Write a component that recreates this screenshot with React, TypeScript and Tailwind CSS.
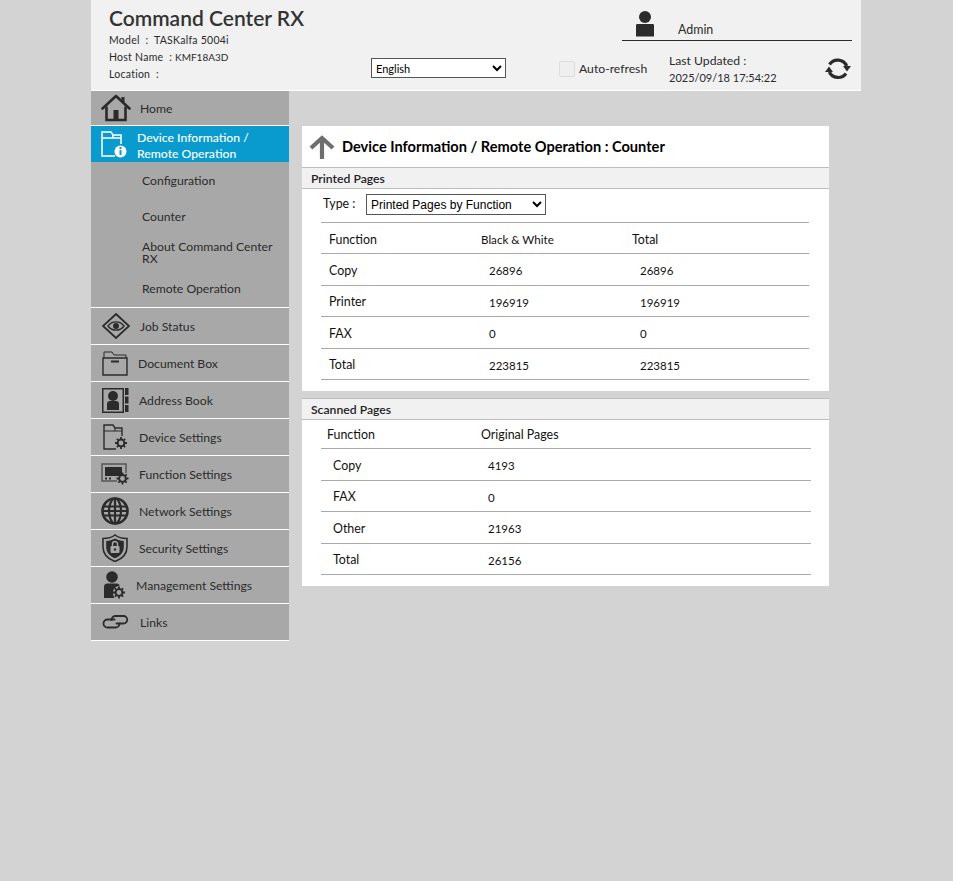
import type { ReactNode } from "react";

const ink = "#2b2b2b";

function HomeIcon() {
  return (
    <svg width="30" height="28" viewBox="0 0 30 28" fill="none" stroke={ink} strokeWidth="2.600">
      <path d="M1.500 14.500 15 2l13.500 12.500" strokeLinecap="round" strokeLinejoin="round" />
      <path d="M22 3v6" strokeWidth="3" />
      <path d="M5.500 12.500V26h19V12.500" />
      <rect x="12.500" y="16" width="5" height="10" fill={ink} stroke="none" />
    </svg>
  );
}

function DeviceInfoIcon() {
  return (
    <svg width="26" height="28" viewBox="0 0 26 28" fill="none" stroke="#fff" strokeWidth="1.500">
      <path d="M14 25H1V1h9l2 3h8v9" />
      <path d="M1 7h19M12 4v3" />
      <circle cx="19.500" cy="20.500" r="6" fill="#fff" stroke="none" />
      <rect x="18.500" y="19" width="2" height="5" fill="#0a9bce" stroke="none" />
      <rect x="18.500" y="16" width="2" height="2" fill="#0a9bce" stroke="none" />
    </svg>
  );
}

function EyeIcon() {
  return (
    <svg width="28" height="26" viewBox="0 0 28 26" fill="none" stroke={ink}>
      <path d="M14 1 27 13 14 25 1 13Z" strokeWidth="1.800" />
      <path d="M6 13c4-5.500 12-5.500 16 0-4 5.500-12 5.500-16 0Z" strokeWidth="1.400" />
      <circle cx="14" cy="13" r="3" fill={ink} stroke="none" />
    </svg>
  );
}

function FolderIcon() {
  return (
    <svg width="26" height="25" viewBox="0 0 26 25" fill="none" stroke={ink} strokeWidth="1.400">
      <path d="M1 24V7h24v17Z" />
      <path d="M2 7V1h8l2 3h12v3" strokeWidth="1" />
      <rect x="9" y="9.500" width="8" height="2" fill={ink} stroke="none" />
    </svg>
  );
}

function AddressIcon() {
  return (
    <svg width="27" height="26" viewBox="0 0 27 26" fill={ink}>
      <path fillRule="evenodd" d="M0 1h22v25H0ZM1.500 2.500v22h19v-22Z" />
      <circle cx="11" cy="9" r="5" />
      <path d="M5 23v-6c0-2 1-3 3-3h6c2 0 3 1 3 3v6Z" />
      <rect x="23" y="1" width="3.500" height="7" />
      <rect x="23" y="9.500" width="3.500" height="7" />
      <rect x="23" y="18" width="3.500" height="7" />
    </svg>
  );
}

function Gear({ cx, cy, color = ink }: { cx: number; cy: number; color?: string }) {
  return (
    <g stroke={color} fill="none">
      <circle cx={cx} cy={cy} r="3.400" strokeWidth="2" />
      <path
        strokeWidth="1.800"
        d={`M${cx} ${cy - 6}v2M${cx} ${cy + 4}v2M${cx - 6} ${cy}h2M${cx + 4} ${cy}h2M${cx - 4.2} ${cy - 4.2}l1.400 1.400M${cx + 2.800} ${cy + 2.800}l1.400 1.400M${cx - 4.2} ${cy + 4.200}l1.400-1.400M${cx + 2.800} ${cy - 2.800}l1.400-1.400`}
      />
    </g>
  );
}

function DeviceSettingsIcon() {
  return (
    <svg width="25" height="26" viewBox="0 0 25 26" fill="none" stroke={ink} strokeWidth="1.400">
      <path d="M13 25H1V1h9l2 3h7v8" />
      <path d="M1 7h18M12 4v3" strokeWidth="1" />
      <Gear cx={18} cy={19} />
    </svg>
  );
}

function FunctionIcon() {
  return (
    <svg width="28" height="22" viewBox="0 0 28 22" fill="none" stroke="#555" strokeWidth="1.500">
      <path d="M16 18H1V1h24v9" />
      <rect x="4" y="4" width="17" height="9" fill={ink} stroke="none" />
      <path d="M4 15.500h2M8 15.500h2" strokeWidth="2" stroke={ink} />
      <Gear cx={21.500} cy={15.500} />
    </svg>
  );
}

function GlobeIcon() {
  return (
    <svg width="28" height="28" viewBox="0 0 28 28" fill="none" stroke={ink} strokeWidth="2.200">
      <circle cx="14" cy="14" r="12.500" strokeWidth="2.600" />
      <ellipse cx="14" cy="14" rx="6" ry="12.500" />
      <path d="M14 1v26M2 9.500h24M1.500 14h25M2 18.500h24" />
    </svg>
  );
}

function ShieldIcon() {
  return (
    <svg width="26" height="28" viewBox="0 0 26 28" fill="none" stroke={ink}>
      <path d="M13 1c3 2.500 7 3.500 12 3.500V13c0 7-5 12-12 14.500C6 25 1 20 1 13V4.500C6 4.500 10 3.500 13 1Z" strokeWidth="1.600" />
      <path d="M13 4.500c3 1.500 5.500 2.300 8.800 2.500v6c0 5.500-3.800 9.300-8.800 11.200C8 22.300 4.200 18.500 4.200 13V7c3.300-.2 5.800-1 8.800-2.500Z" fill={ink} stroke="none" />
      <rect x="8.500" y="12" width="9" height="7" rx="1" fill="#a8a8a8" stroke="none" />
      <path d="M10.500 12V10a2.500 2.500 0 0 1 5 0v2" stroke="#a8a8a8" strokeWidth="1.400" />
      <circle cx="13" cy="15.500" r="1.200" fill={ink} stroke="none" />
    </svg>
  );
}

function ManagementIcon() {
  return (
    <svg width="22" height="28" viewBox="0 0 22 28" fill="none">
      <circle cx="9" cy="6" r="5.800" fill={ink} />
      <path d="M1 27V16c0-2 1-3.500 3.500-3.500h9c2 0 3 1 3 2.500-3 0-6.500 2.500-6.500 6.500 0 2 .5 4 1.500 5.500Z" fill={ink} />
      <Gear cx={16} cy={21.500} />
    </svg>
  );
}

function LinkIcon() {
  return (
    <svg width="27" height="14" viewBox="0 0 27 14" fill="none" stroke={ink} strokeWidth="1.800" strokeLinecap="round">
      <path d="M12.500 4.500H5.500a4 4 0 0 0 0 8h8a4 4 0 0 0 4-4" />
      <path d="M14.500 8.500h7a3.750 3.750 0 0 0 0-7.500h-8a4 4 0 0 0-4 4" />
    </svg>
  );
}

function RefreshIcon() {
  return (
    <svg className="mt-[16px]" width="26" height="24" viewBox="0 0 26 24" fill="none" stroke={ink} strokeWidth="3.200">
      <path d="M4.500 7.500A9.800 9.800 0 0 1 21.700 9" />
      <path d="M21 16.500A9.800 9.800 0 0 1 4.300 15" />
      <path d="M18 9h8l-4 5.500Z" fill={ink} stroke="none" />
      <path d="M0 15h8l-4-5.500Z" fill={ink} stroke="none" />
    </svg>
  );
}

function NavRow({ icon, label, iconBox }: { icon: ReactNode; label: string; iconBox: string }) {
  return (
    <div className="flex h-[37px] items-center border-b border-white bg-[#a8a8a8] text-[12.200px] text-[#2b2b2b]">
      <div className={`flex shrink-0 justify-center ${iconBox}`}>{icon}</div>
      <span className="pt-[2px]">{label}</span>
    </div>
  );
}

function SubItem({ label, className }: { label: string; className: string }) {
  return <div className={`pl-[51px] pr-3 ${className}`}>{label}</div>;
}

function Sidebar() {
  return (
    <aside className="w-[198px] shrink-0">
      <div className="flex h-[35px] items-center border-b border-white bg-[#a8a8a8] text-[12.200px] text-[#2b2b2b]">
        <div className="flex w-[49px] justify-center">
          <HomeIcon />
        </div>
        <span className="pt-[2px]">Home</span>
      </div>
      <div className="flex h-[36px] items-center bg-[#0a9bce] text-[12.200px] font-medium leading-4 text-white">
        <div className="flex w-[46px] justify-center pt-px">
          <DeviceInfoIcon />
        </div>
        <div className="pt-[3px]">
          Device Information /<br />
          Remote Operation
        </div>
      </div>
      <div className="h-[146px] border-b border-white bg-[#a8a8a8] text-[12.200px] text-[#2b2b2b]">
        <SubItem label="Configuration" className="pt-[13px] leading-[11px]" />
        <SubItem label="Counter" className="pt-[25px] leading-[11px]" />
        <SubItem label="About Command Center RX" className="pt-[19px] leading-[12px]" />
        <SubItem label="Remote Operation" className="pt-[18px] leading-[11px]" />
      </div>
      <NavRow icon={<EyeIcon />} iconBox="w-[49px]" label="Job Status" />
      <NavRow icon={<FolderIcon />} iconBox="w-[47px]" label="Document Box" />
      <NavRow icon={<AddressIcon />} iconBox="w-[48px]" label="Address Book" />
      <NavRow icon={<DeviceSettingsIcon />} iconBox="w-[48px]" label="Device Settings" />
      <NavRow icon={<FunctionIcon />} iconBox="w-[48px]" label="Function Settings" />
      <NavRow icon={<GlobeIcon />} iconBox="w-[48px]" label="Network Settings" />
      <NavRow icon={<ShieldIcon />} iconBox="w-[48px]" label="Security Settings" />
      <NavRow icon={<ManagementIcon />} iconBox="w-[45px]" label="Management Settings" />
      <NavRow icon={<LinkIcon />} iconBox="w-[49px]" label="Links" />
    </aside>
  );
}

function Header() {
  return (
    <header className="flex h-[91px] border-b border-white bg-[#f1f1f1] text-[#2b2b2b]">
      <div className="w-[280px] shrink-0 pl-[18px] pt-[4px]">
        <h1 className="text-[21px] font-semibold leading-7 text-[#333]">Command Center RX</h1>
        <div className="text-[10.500px] leading-[17px] tracking-[0.25px]">
          <div>Model&nbsp; : &nbsp;TASKalfa 5004i</div>
          <div>
            Host Name&nbsp; : <span className="text-[10px] tracking-normal">KMF18A3D</span>
          </div>
          <div>Location&nbsp; :</div>
        </div>
      </div>
      <div className="w-[188px] shrink-0 pt-[58px]">
        <select
          defaultValue="English"
          className="block h-5 w-[135px] border border-[#555] bg-white text-[11px] text-black"
        >
          <option>English</option>
        </select>
      </div>
      <div className="flex-1">
        <div className="ml-[63px] mr-[9px] flex h-[41px] border-b border-[#2b2b2b]">
          <svg className="ml-[13px] mt-[11px]" width="20" height="26" viewBox="0 0 20 26" fill={ink}>
            <circle cx="10" cy="6" r="6" />
            <path d="M1 25.500V14.500c0-1 .5-1.500 1.500-1.500h15c1 0 1.500.5 1.500 1.500v11Z" />
          </svg>
          <span className="ml-[23px] mt-[21px] text-[12.400px]">Admin</span>
        </div>
        <div className="flex">
          <div className="flex w-[110px] shrink-0 items-center pt-[11px]">
            <div className="size-4 rounded-[2px] border border-[#ddd] bg-[#efefef]" />
            <span className="ml-[4px] whitespace-nowrap text-[12.200px]">Auto-refresh</span>
          </div>
          <div className="w-[156px] shrink-0 whitespace-nowrap pt-[11px] text-[12.200px] leading-[17px]">
            Last Updated :<br />
            <span className="text-[11px]">2025/09/18 17:54:22</span>
          </div>
          <RefreshIcon />
        </div>
      </div>
    </header>
  );
}

function PrintRow({ cells, className }: { cells: string[]; className: string }) {
  return (
    <div className={`flex items-center border-b border-[#aaa] pt-[3px] ${className}`}>
      <span className="w-[152px] pl-2 text-[12.400px]">{cells[0]}</span>
      <span className="w-[151px] pl-4 text-[11.500px]">{cells[1]}</span>
      <span className="pl-4 text-[11.500px]">{cells[2]}</span>
    </div>
  );
}

function ScanRow({ cells, className }: { cells: string[]; className: string }) {
  return (
    <div className={`flex items-center border-b border-[#aaa] pt-[3px] ${className}`}>
      <span className="w-[167px] pl-3 text-[12.400px]">{cells[0]}</span>
      <span className="text-[11.500px]">{cells[1]}</span>
    </div>
  );
}

function SectionBar({ title }: { title: string }) {
  return (
    <div className="flex h-[22px] items-center border-y border-[#bdbdbd] bg-[#f1f1f1] pl-[9px] pt-[2px] text-[12.200px] font-semibold text-[#222]">
      {title}
    </div>
  );
}

function Main() {
  return (
    <main className="ml-[13px] w-[527px] pt-[35px] text-[12.400px] text-[#111]">
      <section className="h-[265px] bg-white">
        <div className="flex h-[41px] items-center pl-[7px]">
          <svg width="26" height="24" viewBox="0 0 26 24" fill="none" stroke="#6e6e6e" strokeWidth="4.200">
            <path d="M13 24V3M2 13 13 3l11 10" />
          </svg>
          <h2 className="ml-[7px] text-[14.600px] font-bold text-black">Device Information / Remote Operation : Counter</h2>
        </div>
        <SectionBar title="Printed Pages" />
        <div className="flex h-[33px] items-start pl-[21px] pt-[5px]">
          <span className="mt-px w-[43px]">Type :</span>
          <select
            defaultValue="Printed Pages by Function"
            className="block h-[21px] w-[180px] border border-[#555] bg-white font-['Liberation_Sans',sans-serif] text-[12px] text-black"
          >
            <option>Printed Pages by Function</option>
          </select>
        </div>
        <div className="ml-[19px] w-[488px] border-t border-[#aaa]">
          <div className="flex h-[31px] items-center border-b border-[#aaa] pt-[4px]">
            <span className="w-[152px] pl-2">Function</span>
            <span className="w-[151px] pl-2 text-[11.600px]">Black &amp; White</span>
            <span className="pl-2">Total</span>
          </div>
          <PrintRow className="h-[32px]" cells={["Copy", "26896", "26896"]} />
          <PrintRow className="h-[31px]" cells={["Printer", "196919", "196919"]} />
          <PrintRow className="h-[32px]" cells={["FAX", "0", "0"]} />
          <PrintRow className="h-[31px]" cells={["Total", "223815", "223815"]} />
        </div>
      </section>
      <section className="mt-[7px] h-[188px] bg-white">
        <SectionBar title="Scanned Pages" />
        <div className="ml-[19px] w-[490px]">
          <div className="flex h-[29px] items-center border-b border-[#aaa] pl-[6px] pt-[3px]">
            <span className="w-[154px]">Function</span>
            <span>Original Pages</span>
          </div>
          <ScanRow className="h-[32px]" cells={["Copy", "4193"]} />
          <ScanRow className="h-[31px]" cells={["FAX", "0"]} />
          <ScanRow className="h-[32px]" cells={["Other", "21963"]} />
          <ScanRow className="h-[31px]" cells={["Total", "26156"]} />
        </div>
      </section>
    </main>
  );
}

export default function App() {
  return (
    <div className="min-h-[881px] bg-[#d3d3d3] font-['Lato',sans-serif]">
      <div className="ml-[91px] w-[770px]">
        <Header />
        <div className="flex">
          <Sidebar />
          <Main />
        </div>
      </div>
    </div>
  );
}
